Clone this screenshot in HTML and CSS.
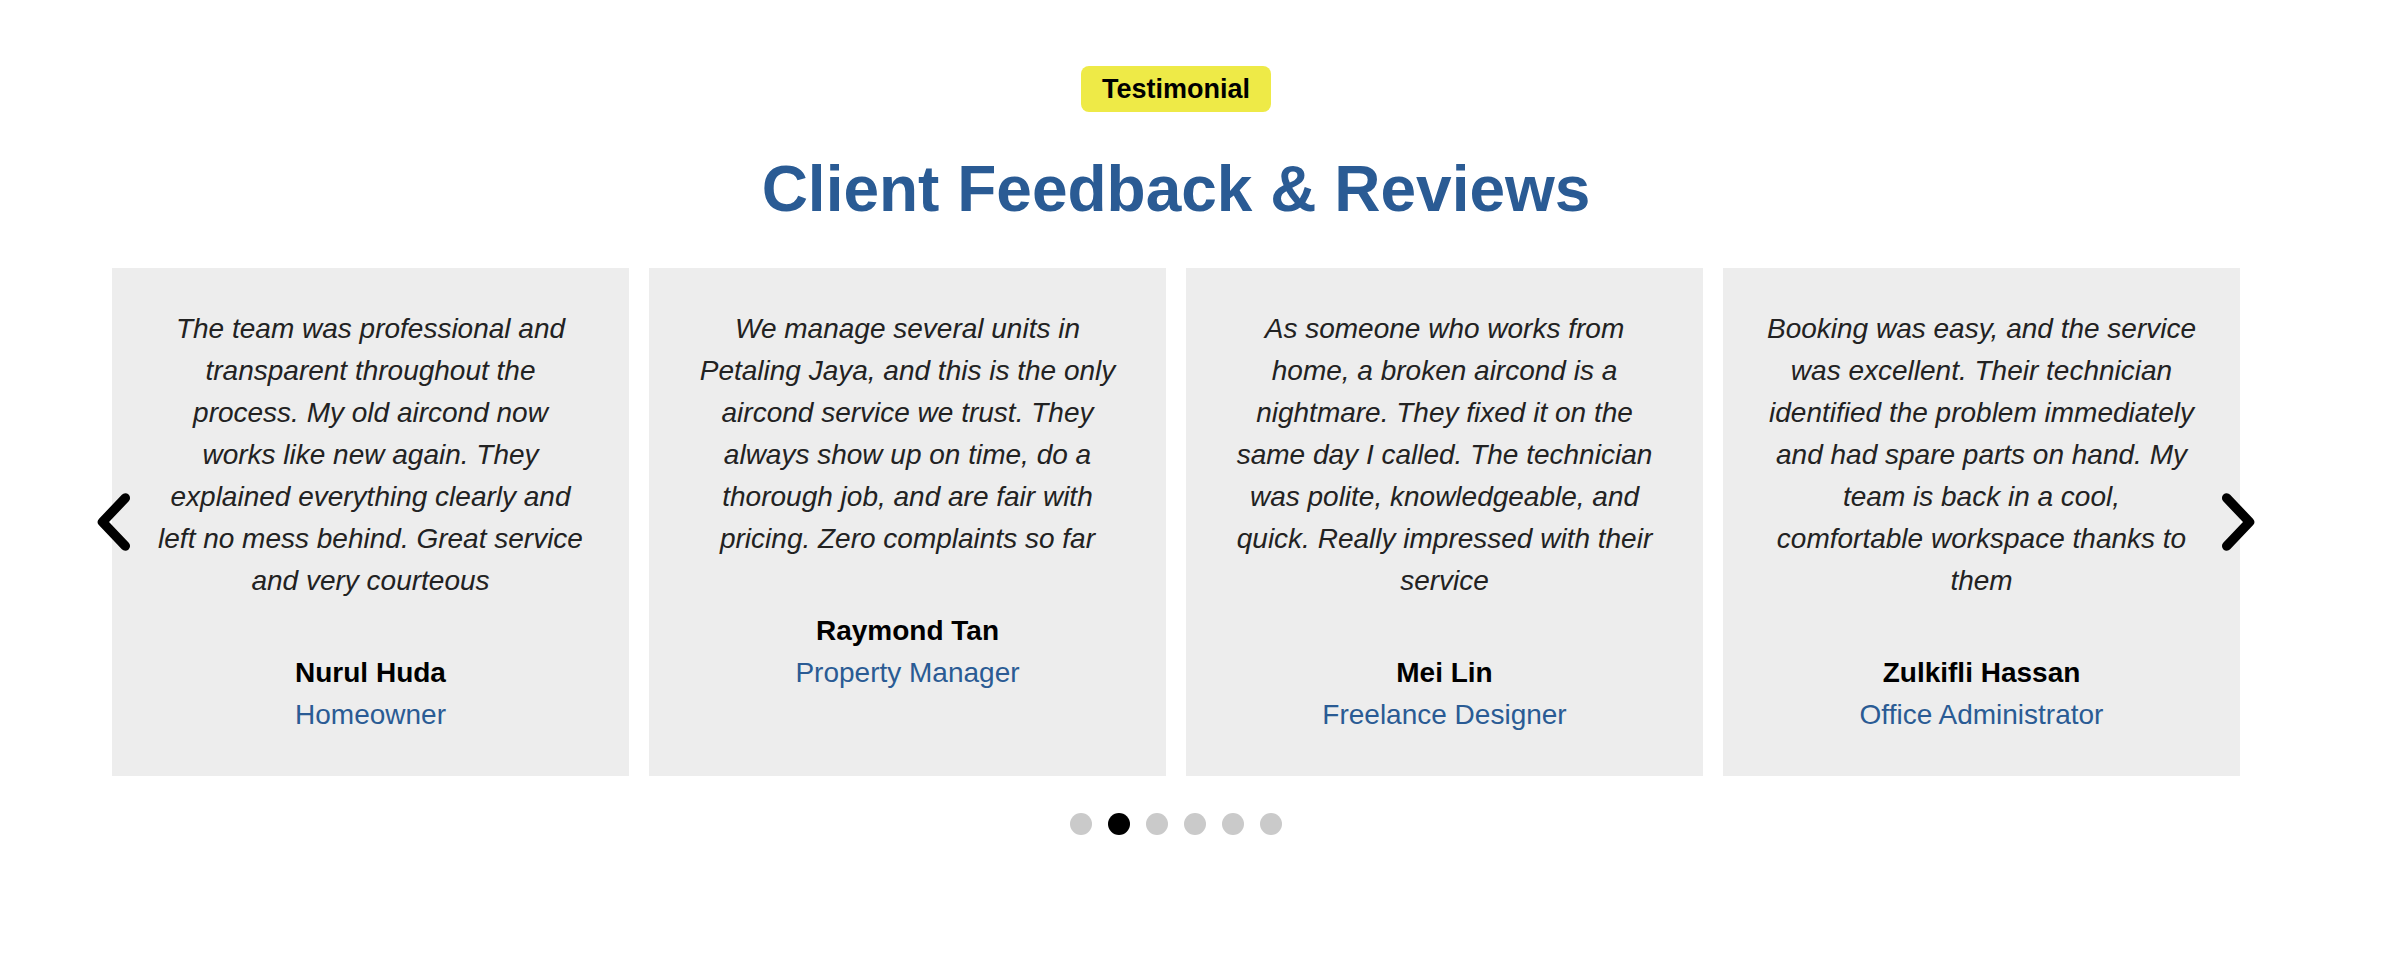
FILE: index.html
```html
<!DOCTYPE html>
<html lang="en">
<head>
<meta charset="utf-8">
<title>Client Feedback &amp; Reviews</title>
<link rel="stylesheet" href="styles.css">
</head>
<body>
<section class="testimonials">
  <span class="badge">Testimonial</span>
  <h2 class="title">Client Feedback &amp; Reviews</h2>
  <div class="carousel">
    <button class="arrow arrow-prev" aria-label="Previous">
      <svg viewBox="0 0 40 60" width="40" height="60"><polyline points="31.3,6 8.5,30 31.3,54" fill="none" stroke="#000" stroke-width="9.5" stroke-linecap="round" stroke-linejoin="round"/></svg>
    </button>
    <div class="track">
      <article class="card">
        <p class="quote">The team was professional and<br>transparent throughout the<br>process. My old aircond now<br>works like new again. They<br>explained everything clearly and<br>left no mess behind. Great service<br>and very courteous</p>
        <p class="name">Nurul Huda</p>
        <p class="role">Homeowner</p>
      </article>
      <article class="card">
        <p class="quote">We manage several units in<br>Petaling Jaya, and this is the only<br>aircond service we trust. They<br>always show up on time, do a<br>thorough job, and are fair with<br>pricing. Zero complaints so far</p>
        <p class="name">Raymond Tan</p>
        <p class="role">Property Manager</p>
      </article>
      <article class="card">
        <p class="quote">As someone who works from<br>home, a broken aircond is a<br>nightmare. They fixed it on the<br>same day I called. The technician<br>was polite, knowledgeable, and<br>quick. Really impressed with their<br>service</p>
        <p class="name">Mei Lin</p>
        <p class="role">Freelance Designer</p>
      </article>
      <article class="card">
        <p class="quote">Booking was easy, and the service<br>was excellent. Their technician<br>identified the problem immediately<br>and had spare parts on hand. My<br>team is back in a cool,<br>comfortable workspace thanks to<br>them</p>
        <p class="name">Zulkifli Hassan</p>
        <p class="role">Office Administrator</p>
      </article>
    </div>
    <button class="arrow arrow-next" aria-label="Next">
      <svg viewBox="0 0 40 60" width="40" height="60"><polyline points="8.7,6 31.5,30 8.7,54" fill="none" stroke="#000" stroke-width="9.5" stroke-linecap="round" stroke-linejoin="round"/></svg>
    </button>
  </div>
  <div class="dots">
    <span class="dot"></span>
    <span class="dot dot-active"></span>
    <span class="dot"></span>
    <span class="dot"></span>
    <span class="dot"></span>
    <span class="dot"></span>
  </div>
</section>
</body>
</html>
```

FILE: styles.css
```css
* {
  box-sizing: border-box;
}

body {
  margin: 0;
  background: #ffffff;
  font-family: "Liberation Sans", Arial, Helvetica, sans-serif;
  color: #000000;
}

.testimonials {
  width: 2352px;
  padding-top: 66px;
  display: flex;
  flex-direction: column;
  align-items: center;
}

.badge {
  display: inline-flex;
  align-items: center;
  height: 46px;
  padding: 0 21px;
  background: #eeea47;
  border-radius: 8px;
  font-size: 27px;
  font-weight: 700;
  color: #000000;
}

.title {
  margin: 41px 0 0;
  font-size: 64px;
  line-height: 1.15;
  font-weight: 700;
  color: #2a5b94;
}

.carousel {
  position: relative;
  width: 100%;
  margin-top: 41px;
  padding: 0 112px;
}

.track {
  display: grid;
  grid-template-columns: repeat(4, 1fr);
  gap: 20px;
}

.card {
  background: #ededed;
  padding: 40px;
  text-align: center;
}

.quote {
  margin: 0 0 50px;
  font-size: 28px;
  line-height: 42px;
  font-style: italic;
  color: #222222;
}

.name {
  margin: 0;
  font-size: 28px;
  line-height: 42px;
  font-weight: 700;
}

.role {
  margin: 0;
  font-size: 28px;
  line-height: 42px;
  color: #2a5b94;
}

.arrow {
  position: absolute;
  top: 50%;
  transform: translateY(-50%);
  width: 40px;
  height: 60px;
  padding: 0;
  border: 0;
  background: none;
  cursor: pointer;
}

.arrow svg {
  display: block;
}

.arrow-prev {
  left: 94px;
}

.arrow-next {
  right: 94px;
}

.dots {
  display: flex;
  gap: 16px;
  margin-top: 37px;
}

.dot {
  width: 22px;
  height: 22px;
  border-radius: 50%;
  background: #cacaca;
}

.dot-active {
  background: #000000;
}
```
